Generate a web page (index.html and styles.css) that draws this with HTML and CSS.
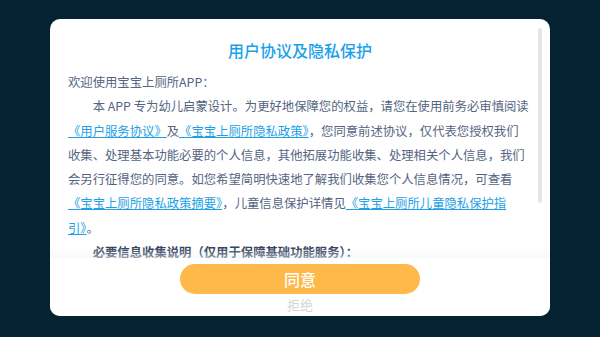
FILE: index.html
```html
<!DOCTYPE html>
<html lang="zh-CN">
<head>
    <meta charset="UTF-8">
    <meta name="viewport" content="width=device-width, initial-scale=1.0">
    <title>用户协议及隐私保护</title>
    <link rel="stylesheet" href="styles.css">
</head>
<body>
    <div class="overlay">
        <div class="dialog" role="dialog" aria-labelledby="dialogTitle">
            <h1 class="dialog-title" id="dialogTitle">用户协议及隐私保护</h1>

            <div class="dialog-body">
                <p>欢迎使用宝宝上厕所APP：</p>
                <p class="indent">本 APP 专为幼儿启蒙设计。为更好地保障您的权益，请您在使用前务必审慎阅读<br><a href="#">《用户服务协议》</a>及<a href="#">《宝宝上厕所隐私政策》</a>，您同意前述协议，仅代表您授权我们<br>收集、处理基本功能必要的个人信息，其他拓展功能收集、处理相关个人信息，我们<br>会另行征得您的同意。如您希望简明快速地了解我们收集您个人信息情况，可查看<br><a href="#">《宝宝上厕所隐私政策摘要》</a>，儿童信息保护详情见<a href="#">《宝宝上厕所儿童隐私保护指<br>引》</a>。</p>
                <p class="indent strong">必要信息收集说明（仅用于保障基础功能服务）：</p>
            </div>

            <div class="scrollbar"></div>

            <div class="dialog-footer">
                <button class="btn-agree" type="button">同意</button>
                <button class="btn-refuse" type="button">拒绝</button>
            </div>
        </div>
    </div>
</body>
</html>
```

FILE: styles.css
```css
:root {
    --backdrop: #052233;
    --title-color: #1aa1eb;
    --text-color: #55647f;
    --strong-color: #36445d;
    --link-color: #1e9fe6;
    --agree-bg: #ffb84a;
    --refuse-color: #d6d6d6;
}

html, body {
    margin: 0;
    padding: 0;
    height: 100%;
}

body {
    background-color: var(--backdrop);
    font-family: "Noto Sans CJK SC", "Noto Sans", sans-serif;
}

.overlay {
    padding-top: 19px;
}

.dialog {
    position: relative;
    display: flex;
    flex-direction: column;
    width: 500px;
    height: 297px;
    margin: 0 auto;
    background-color: white;
    border-radius: 10px;
    overflow: hidden;
}

.dialog-title {
    margin: 0;
    padding-top: 19px;
    font-size: 16px;
    line-height: 24px;
    font-weight: 500;
    color: var(--title-color);
    text-align: center;
}

/* line breaks follow the app's own wrapping */
.dialog-body {
    flex: 1;
    overflow: hidden;
    padding: 8px 12px 0 18px;
    font-size: 12.35px;
    line-height: 24.3px;
    color: var(--text-color);
}

.dialog-body p {
    margin: 0;
}

.dialog-body .indent {
    text-indent: 2em;
}

.dialog-body .strong {
    font-weight: 700;
    color: var(--strong-color);
}

.dialog-body a {
    color: var(--link-color);
    text-decoration: underline;
}

.scrollbar {
    position: absolute;
    top: 9px;
    right: 8px;
    width: 4px;
    height: 175px;
    background-color: #e6e6e6;
    border-radius: 2px;
}

.dialog-footer {
    position: relative;
    height: 58px;
    background-color: white;
    text-align: center;
}

.dialog-footer::before {
    content: "";
    position: absolute;
    left: 0;
    right: 0;
    bottom: 100%;
    height: 10px;
    background: linear-gradient(rgba(255, 255, 255, 0), rgba(238, 241, 245, 0.5));
}

.btn-agree {
    display: block;
    width: 240px;
    height: 30px;
    margin: 6px auto 0;
    border: none;
    border-radius: 15px;
    background-color: var(--agree-bg);
    color: white;
    font-family: inherit;
    font-size: 16px;
    font-weight: 500;
    line-height: 30px;
    padding: 0;
}

.btn-refuse {
    display: block;
    margin: 2px auto 0;
    padding: 0;
    border: none;
    background: none;
    color: var(--refuse-color);
    font-family: inherit;
    font-size: 13px;
    line-height: 18px;
}
```
